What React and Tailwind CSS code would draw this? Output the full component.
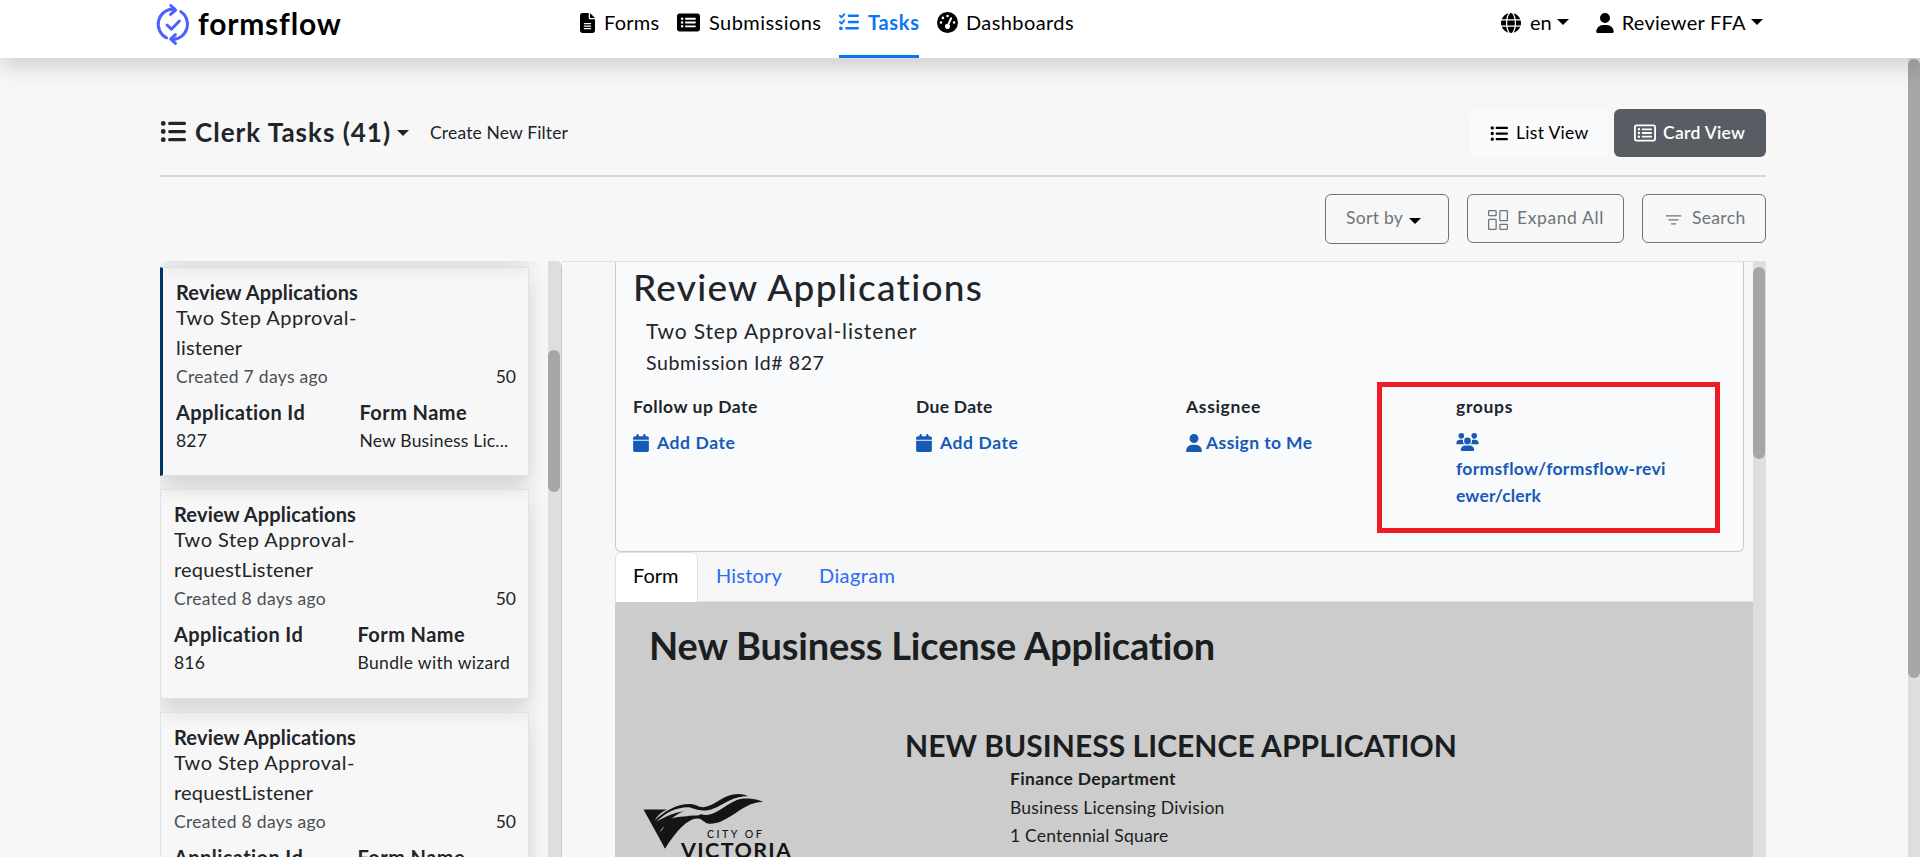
import React from 'react';
import {
  FaFileLines,
  FaRectangleList,
  FaRegRectangleList,
  FaListCheck,
  FaGaugeHigh,
  FaGlobe,
  FaUser,
  FaListUl,
  FaCalendar,
  FaUsers,
} from 'react-icons/fa6';
import { BsColumnsGap, BsFilter } from 'react-icons/bs';

function Caret({ className = '' }) {
  return (
    <svg viewBox="0 0 12 6" className={`h-[6px] w-[12px] shrink-0 ${className}`} fill="currentColor">
      <path d="M0 0H12L6 6Z" />
    </svg>
  );
}

function Logo() {
  return (
    <svg
      viewBox="0 0 36 44"
      className="h-[44px] w-[36px]"
      fill="none"
      stroke="#4c61ff"
      strokeWidth="3"
      strokeLinecap="round"
      strokeLinejoin="round"
    >
      <path d="M11.5 35.8A15.2 15.2 0 0 1 19.5 7.1" />
      <path d="M15.8 3.6L20.6 8L15.6 12.4" />
      <path d="M25.8 9.6A15.2 15.2 0 0 1 17.5 37.4" />
      <path d="M20.4 32.6L15.6 37L20.4 41.4" />
      <path d="M12 23L16.4 27.2L24.4 19" />
    </svg>
  );
}

function VictoriaLogo() {
  return (
    <svg viewBox="0 0 180 90" className="h-[90px] w-[180px]" fill="#141414">
      <path d="M13.5 29.5H37C31.500 32 27.500 35.500 24.500 40.500C34 31.500 46 24 60 24C66 24 69 28 75 27C86 25 94 14 108 14C113 14 116 15 118 16.500C103 16 96 24 86 29.500C80 33 74 33.500 69 31.500C63 28.500 56 29.500 50 33C43 37 36 44 29.500 52C39 43 52 35.500 64 35.500C70 36 71 33 78 32C92 29 100 17.500 119 18.500C125 19 130 20 133 22C120 22 112 29 101 36C93 41 86 44.500 78 43.500C74 43 73 39 68 38.500C58 38 47 50 35 68.500Z" />
      <path d="M26 42C37 31 50 26.500 60 27.500C68 30 72 31.500 79 30C92 27 100 16 118 16.500C104 19 97 26 87 31.500C80 35.500 74 36 68 33C62 30.500 55 33.500 49 36.500C41 41 35 46 29 53C37 42 45 34 55 31.500C45 32 36 36 26 42Z" fill="#ccc" />
      <path d="M40 39C34 44 32 50 30 58L35 68.500C42 55 52 42 62 38C56 35.500 48 36 40 39Z" />
      <text x="77" y="58.300" fontFamily="Lato, sans-serif" fontWeight="500" fontSize="10.600" letterSpacing="1.300" textLength="56">CITY OF</text>
      <text x="51" y="77.500" fontFamily="Lato, sans-serif" fontWeight="700" fontSize="21.500" textLength="110">VICTORIA</text>
    </svg>
  );
}

function TaskCard({ active, subtitle, created, id, form, formClass }) {
  return (
    <div
      className={`h-[209.3px] w-[369px] shrink-0 border border-[#dee2e6] pt-[14px] pr-[12px] shadow-[0_10px_20px_rgba(0,0,0,0.15)] ${
        active ? 'border-l-[3px] border-l-[#003366] pl-[13px]' : 'pl-[13px]'
      }`}
    >
      <div className="text-[20px] font-bold leading-[20px] tracking-[0.16px]">Review Applications</div>
      <div className="text-[20px] leading-[30px]">
        <div className="tracking-[0.5px]">Two Step Approval-</div>
        <div className="tracking-[0.18px]">{subtitle}</div>
      </div>
      <div className="mt-px flex justify-between text-[17.5px] leading-[28px]">
        <span className="tracking-[0.3px] text-[#4a4f54]">{created}</span>
        <span>50</span>
      </div>
      <div className="mt-[6px] grid grid-cols-[183.5px_1fr]">
        <div className="text-[20px] font-bold leading-[30px] tracking-[0.41px]">Application Id</div>
        <div className="text-[20px] font-bold leading-[30px] tracking-[0.42px]">Form Name</div>
        <div className="text-[17.5px] leading-[28px] tracking-[0.2px]">{id}</div>
        <div className={`whitespace-nowrap text-[17.5px] leading-[28px] ${formClass}`}>{form}</div>
      </div>
    </div>
  );
}

function Field({ label, labelClass, children }) {
  return (
    <div className="text-[17.5px] font-bold leading-[26px]">
      <div className={labelClass}>{label}</div>
      <div className="mt-[10px] text-[#165ab6]">{children}</div>
    </div>
  );
}

function Header() {
  return (
    <header className="z-10 flex h-[58px] shrink-0 bg-white pl-[155px] text-[20px] text-black shadow-[0_10px_20px_rgba(0,0,0,0.15)]">
      <div className="flex h-[48px] w-[425px] items-center">
        <Logo />
        <span className="mb-[2px] ml-[7px] text-[30px] font-bold leading-[46px] tracking-[0.8px]">formsflow</span>
      </div>
      <nav className="flex h-[58px] w-[921px]">
        <div className="flex h-[45px] w-[97px] items-center">
          <FaFileLines className="h-[20px] w-[15px]" />
          <span className="mb-[2px] ml-[9px] tracking-[0.27px]">Forms</span>
        </div>
        <div className="flex h-[45px] w-[162px] items-center">
          <FaRectangleList className="h-[21px] w-[23px]" />
          <span className="mb-[2px] ml-[9px] tracking-[0.45px]">Submissions</span>
        </div>
        <div className="flex h-[58px] w-[80px] border-b-[3px] border-[#0a75f5] text-[#0a75f5]">
          <div className="flex h-[44px] items-center">
            <FaListCheck className="mb-px h-[20px] w-[20px]" />
            <span className="ml-[9px] font-bold tracking-[0.7px]">Tasks</span>
          </div>
        </div>
        <div className="ml-[18px] flex h-[45px] items-center">
          <FaGaugeHigh className="h-[21px] w-[21px]" />
          <span className="mb-[2px] ml-[8px] tracking-[0.4px]">Dashboards</span>
        </div>
      </nav>
      <div className="flex h-[45px] items-center">
        <FaGlobe className="h-[20px] w-[20px]" />
        <span className="mb-[2px] ml-[9px]">en</span>
        <Caret className="mb-px ml-[5px]" />
        <FaUser className="ml-[27px] h-[20px] w-[18px]" />
        <span className="mb-[2px] ml-[8px] tracking-[0.26px]">Reviewer FFA</span>
        <Caret className="mb-px ml-[5px]" />
      </div>
    </header>
  );
}

function Toolbar() {
  return (
    <>
      <div className="flex h-[119px] shrink-0 items-end justify-between border-b-2 border-[#d5d6d8] pb-[18px]">
        <div className="flex h-[48px] items-center">
          <FaListUl className="mb-[3px] h-[27px] w-[26px]" />
          <span className="mb-[2px] ml-[9px] text-[26px] font-bold tracking-[1px]">Clerk Tasks (41)</span>
          <Caret className="ml-[6px]" />
          <span className="ml-[21px] text-[17.5px] tracking-[0.14px]">Create New Filter</span>
        </div>
        <div className="flex gap-[6px] text-[17.5px]">
          <button className="flex h-[48px] w-[138px] items-center rounded-[6px] bg-[#f9fafc] pl-[20px] text-black">
            <FaListUl className="h-[19px] w-[18px]" />
            <span className="ml-[8px] tracking-[0.3px]">List View</span>
          </button>
          <button className="flex h-[48px] w-[152px] items-center rounded-[6px] bg-[#575d63] pl-[20px] text-white">
            <FaRegRectangleList className="h-[20px] w-[22px]" />
            <span className="ml-[7px] font-semibold tracking-[0.3px]">Card View</span>
          </button>
        </div>
      </div>
      <div className="flex h-[84px] shrink-0 items-start justify-end gap-[18px] pt-[17px] text-[17.5px] text-[#6c757d]">
        <button className="flex h-[50px] w-[124px] items-center rounded-[6px] border border-[#6c757d] pl-[20px]">
          <span className="mb-px tracking-[0.3px]">Sort by</span>
          <Caret className="mt-[4px] ml-[6px] text-black" />
        </button>
        <button className="flex h-[49px] w-[157px] items-center rounded-[6px] border border-[#6c757d] pl-[20px]">
          <BsColumnsGap className="mt-[3px] h-[20px] w-[20px]" />
          <span className="ml-[9px] tracking-[0.6px]">Expand All</span>
        </button>
        <button className="flex h-[49px] w-[124px] items-center rounded-[6px] border border-[#6c757d] pl-[20px]">
          <BsFilter className="mt-[3px] h-[21px] w-[21px]" />
          <span className="ml-[8px] tracking-[0.33px]">Search</span>
        </button>
      </div>
    </>
  );
}

function TaskList() {
  return (
    <aside className="flex w-[402px] shrink-0 overflow-hidden rounded-tl-[8px] rounded-tr-[6px] border-r border-[#c9c9c9]">
      <div className="flex w-[388px] shrink-0 flex-col gap-[13px] overflow-hidden">
        <div className="-mt-[20px] h-[13px] w-[369px] shrink-0 shadow-[0_10px_20px_rgba(0,0,0,0.15)]" />
        <TaskCard
          active
          subtitle="listener"
          created="Created 7 days ago"
          id="827"
          form="New Business Lic..."
          formClass="tracking-[0.18px]"
        />
        <TaskCard
          subtitle="requestListener"
          created="Created 8 days ago"
          id="816"
          form="Bundle with wizard"
          formClass="tracking-[0.34px]"
        />
        <TaskCard
          subtitle="requestListener"
          created="Created 8 days ago"
          id="815"
          form="Bundle with wizard"
          formClass="tracking-[0.34px]"
        />
      </div>
      <div className="w-[13px] bg-[#dedede] pt-[89px]">
        <div className="h-[142px] w-[12px] rounded-full bg-[#a6a6a6]" />
      </div>
    </aside>
  );
}

function TaskDetail() {
  return (
    <section className="flex flex-1 overflow-hidden border-t border-[#dee2e6]">
      <div className="w-[1191px] shrink-0 pl-[53px]">
        <div className="relative h-[290px] w-[1129px] rounded-b-[6px] border border-t-0 border-[#c8cbce] bg-[#f9fafc] pt-[2px] pl-[17px]">
          <h1 className="text-[37px] font-medium leading-[45px] tracking-[1.25px]">Review Applications</h1>
          <div className="mt-[6px] pl-[13px] text-[21px] leading-[32px] tracking-[0.87px]">Two Step Approval-listener</div>
          <div className="pl-[13px] text-[19.5px] leading-[32px] tracking-[0.6px]">Submission Id# 827</div>
          <div className="mt-[15px] grid grid-cols-[283px_270px_270px_222px]">
            <Field label="Follow up Date" labelClass="tracking-[0.54px]">
              <div className="flex items-center">
                <FaCalendar className="mb-px h-[18px] w-[16px]" />
                <span className="ml-[8px] tracking-[0.6px]">Add Date</span>
              </div>
            </Field>
            <Field label="Due Date" labelClass="tracking-[0.3px]">
              <div className="flex items-center">
                <FaCalendar className="mb-px h-[18px] w-[16px]" />
                <span className="ml-[8px] tracking-[0.6px]">Add Date</span>
              </div>
            </Field>
            <Field label="Assignee" labelClass="tracking-[0.65px]">
              <div className="flex items-center">
                <FaUser className="mb-px h-[18px] w-[16px]" />
                <span className="ml-[4px] tracking-[0.4px]">Assign to Me</span>
              </div>
            </Field>
            <Field label="groups" labelClass="tracking-[0.65px]">
              <div className="flex h-[26px] items-center">
                <FaUsers className="mb-[3px] h-[18px] w-[23px]" />
              </div>
              <div className="leading-[26.7px] tracking-[0.32px]">formsflow/formsflow-revi</div>
              <div className="leading-[26.7px] tracking-[0.14px]">ewer/clerk</div>
            </Field>
          </div>
          <div className="absolute top-[120px] left-[761px] h-[151px] w-[343px] border-[5px] border-[#ee1c25]" />
        </div>
        <div className="flex h-[50px] border-b border-[#dee2e6] text-[20px] leading-[46px] text-[#2a6cf5]">
          <div className="-mb-px w-[83px] rounded-t-[6px] border border-b-0 border-[#dee2e6] bg-white pl-[17px] leading-[45px] text-black">Form</div>
          <div className="pl-[18px] tracking-[0.19px]">History</div>
          <div className="pl-[37px] tracking-[0.4px]">Diagram</div>
        </div>
        <div className="h-[300px] bg-[#cccccc] pt-[20px] text-[#1a1e21]">
          <h2 className="pl-[34px] text-[38px] font-bold leading-[46px] tracking-[-0.17px]">New Business License Application</h2>
          <h3 className="mt-[59px] pl-[290px] text-[30px] font-bold leading-[36px] tracking-[0.05px]">NEW BUSINESS LICENCE APPLICATION</h3>
          <div className="flex">
            <div className="w-[395px] pt-[17px] pl-[15px]">
              <VictoriaLogo />
            </div>
            <div className="pt-[2px] text-[17.5px] leading-[28.5px]">
              <div className="font-bold tracking-[0.36px]">Finance Department</div>
              <div className="tracking-[0.21px]">Business Licensing Division</div>
              <div className="tracking-[0.21px]">1 Centennial Square</div>
            </div>
          </div>
        </div>
      </div>
      <div className="w-[13px] bg-[#dedede] pt-[5px]">
        <div className="h-[192px] w-[12px] rounded-full bg-[#a6a6a6]" />
      </div>
    </section>
  );
}

export default function App() {
  return (
    <div className="flex h-[857px] w-[1920px] flex-col overflow-hidden bg-[#f7f7f7] font-['Lato',sans-serif] text-[#212529]">
      <Header />
      <div className="flex min-h-0 flex-1">
        <main className="flex w-[1908px] flex-col pr-[142px] pl-[160px]">
          <Toolbar />
          <div className="flex min-h-0 flex-1">
            <TaskList />
            <TaskDetail />
          </div>
        </main>
        <div className="w-[12px] bg-[#dedede] pt-px">
          <div className="h-[619px] rounded-full bg-[#a6a6a6]" />
        </div>
      </div>
    </div>
  );
}
